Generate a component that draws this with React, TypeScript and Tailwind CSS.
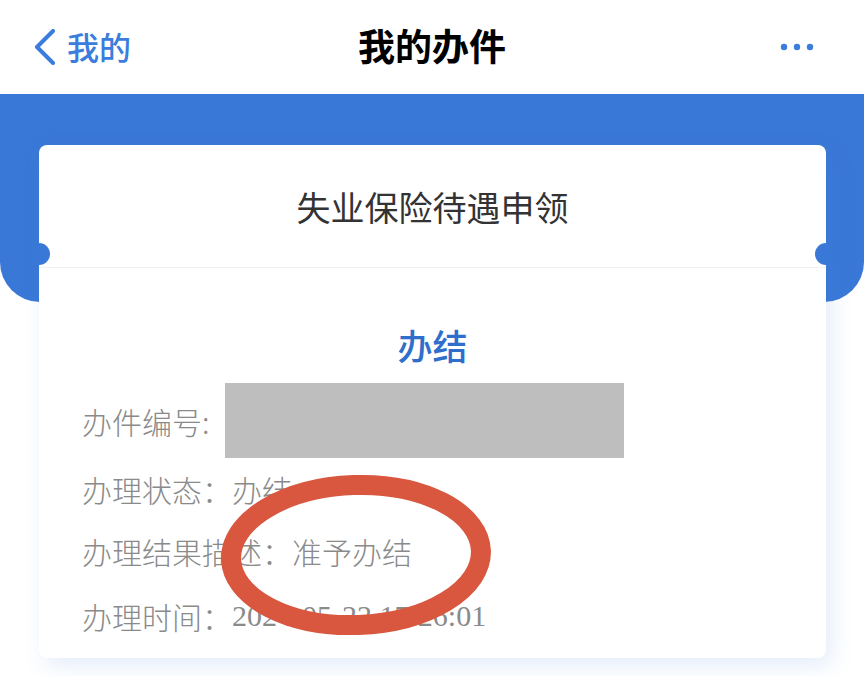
import React from 'react'

const cjk = { fontFamily: '"Noto Sans CJK SC", "Noto Sans", sans-serif' }

function BackChevron() {
  return (
    <svg width="24" height="36" viewBox="0 0 24 36" fill="none">
      <path d="M20 2 L4 18 L20 34" stroke="#3a7ddd" strokeWidth="4" strokeLinecap="round" strokeLinejoin="round" />
    </svg>
  )
}

function MoreDots() {
  return (
    <svg width="34" height="8" viewBox="0 0 34 8">
      <circle cx="4" cy="4" r="3.2" fill="#3a7ddd" />
      <circle cx="17" cy="4" r="3.2" fill="#3a7ddd" />
      <circle cx="30" cy="4" r="3.2" fill="#3a7ddd" />
    </svg>
  )
}

function InfoRow({ label, children, className }: { label: string; children?: React.ReactNode; className?: string }) {
  return (
    <div className={`flex items-center text-[30px] leading-[40px] font-light text-[#8a8a8a] ${className ?? ''}`}>
      <span>{label}</span>
      {children}
    </div>
  )
}

export default function App() {
  return (
    <div className="relative w-[864px] h-[676px] bg-white overflow-hidden" style={cjk}>
      {/* nav bar */}
      <div className="grid grid-cols-3 items-center h-[94px]">
        <div className="flex items-center pl-[33px] gap-[10px] text-[#3a7ddd] text-[32px] font-medium">
          <BackChevron />
          <span className="-mt-[2px]">我的</span>
        </div>
        <div className="text-center text-[37px] font-bold text-black -mt-[2px]">我的办件</div>
        <div className="flex justify-end pr-[50px]">
          <MoreDots />
        </div>
      </div>

      {/* blue band */}
      <div className="h-[208px] bg-[#3a78d7] rounded-b-[40px]" />

      {/* card */}
      <div className="relative ml-[39px] mr-[38px] -mt-[157px] bg-white rounded-[8px] shadow-[6px_8px_22px_rgba(70,130,220,0.14)]">
        <div className="h-[123px] flex items-center justify-center text-[34px] text-[#333333] border-b border-[#f1f1f1]">
          失业保险待遇申领
        </div>
        <div className="absolute left-[-11px] top-[98px] w-[22px] h-[22px] rounded-full bg-[#3a78d7]" />
        <div className="absolute right-[-11px] top-[98px] w-[22px] h-[22px] rounded-full bg-[#3a78d7]" />

        <div className="pt-[53px] text-center text-[35px] leading-[48px] font-medium text-[#2f6ecb]">办结</div>

        <div className="pl-[43px] pb-[22px]">
          <InfoRow label="办件编号:" className="mt-[14px] h-[75px]">
            <div className="ml-[15px] w-[399px] h-[75px] bg-[#bebebe]" />
          </InfoRow>
          <InfoRow label="办理状态：" className="mt-[11px]">
            <span>办结</span>
          </InfoRow>
          <InfoRow label="办理结果描述：" className="mt-[22px]">
            <span>准予办结</span>
          </InfoRow>
          <InfoRow label="办理时间：" className="mt-[25px]">
            <span className="font-normal" style={{ fontFamily: '"Liberation Serif", serif' }}>2024-05-22 17:26:01</span>
          </InfoRow>
        </div>
      </div>

      {/* red hand-drawn circle annotation */}
      <svg className="absolute left-[206px] top-[461px]" width="302" height="190" viewBox="0 0 302 190">
        <ellipse cx="150" cy="94" rx="125" ry="70" fill="none" stroke="#d9573f" strokeWidth="20" transform="rotate(-2 150 94)" />
      </svg>
    </div>
  )
}
